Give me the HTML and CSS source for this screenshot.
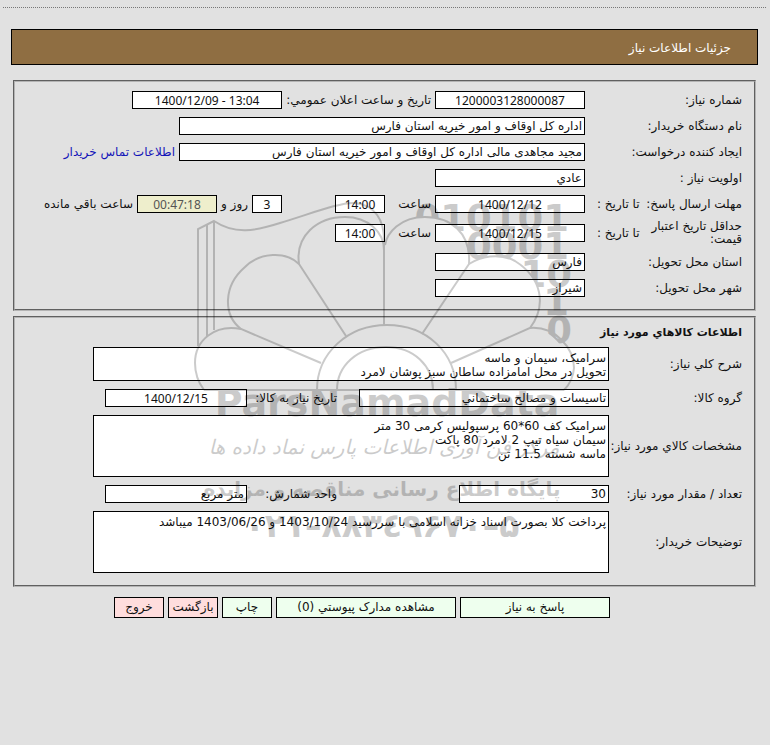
FILE: index.html
```html
<!DOCTYPE html>
<html lang="fa" dir="rtl">
<head>
    <meta charset="UTF-8">
    <meta name="viewport" content="width=device-width, initial-scale=1.0">
    <title>جزئیات اطلاعات نیاز</title>
    <link rel="stylesheet" href="styles.css">
</head>
<body>
    <hr class="top-line">
    <h1 class="title-bar">جزئیات اطلاعات نیاز</h1>

    <main class="content">
        <section class="panel info">
            <div class="row">
                <label class="name" for="number">شماره نیاز:</label>
                <input class="field medium center" id="number" value="1200003128000087" readonly>
                <label for="announce">تاریخ و ساعت اعلان عمومي:</label>
                <input class="field medium center" id="announce" value="1400/12/09 - 13:04" dir="ltr" readonly>
            </div>
            <div class="row">
                <label class="name" for="org">نام دستگاه خریدار:</label>
                <input class="field long" id="org" value="اداره کل اوقاف و امور خیریه استان فارس" readonly>
            </div>
            <div class="row">
                <label class="name" for="creator">ایجاد کننده درخواست:</label>
                <input class="field long" id="creator" value="مجید مجاهدی مالی اداره کل اوقاف و امور خیریه استان فارس" readonly>
                <a href="#contact">اطلاعات تماس خریدار</a>
            </div>
            <div class="row">
                <label class="name" for="priority">اولویت نیاز :</label>
                <input class="field medium" id="priority" value="عادي" readonly>
            </div>
            <div class="row">
                <div class="name split">
                    <span>مهلت ارسال پاسخ:</span>
                    <label class="until" for="reply-date">تا تاریخ :</label>
                </div>
                <input class="field medium center" id="reply-date" value="1400/12/12" dir="ltr" readonly>
                <label class="hour" for="reply-hour">ساعت</label>
                <input class="field time center" id="reply-hour" value="14:00" dir="ltr" readonly>
                <div class="remaining">
                    <input class="field days center" id="days" value="3" readonly>
                    <label for="days">روز و</label>
                    <input class="field counter center" id="counter" value="00:47:18" dir="ltr" readonly>
                    <label for="counter">ساعت باقي مانده</label>
                </div>
            </div>
            <div class="row">
                <div class="name split">
                    <span class="two-lines">حداقل تاریخ اعتبار قیمت:</span>
                    <label class="until" for="price-date">تا تاریخ :</label>
                </div>
                <input class="field medium center" id="price-date" value="1400/12/15" dir="ltr" readonly>
                <label class="hour" for="price-hour">ساعت</label>
                <input class="field time center" id="price-hour" value="14:00" dir="ltr" readonly>
            </div>
            <div class="row">
                <label class="name" for="province">استان محل تحویل:</label>
                <input class="field medium" id="province" value="فارس" readonly>
            </div>
            <div class="row">
                <label class="name" for="city">شهر محل تحویل:</label>
                <input class="field medium" id="city" value="شیراز" readonly>
            </div>
        </section>

        <section class="panel goods">
            <h2>اطلاعات کالاهاي مورد نیاز</h2>
            <div class="row">
                <label class="name" for="summary">شرح کلي نیاز:</label>
                <textarea class="field area short" id="summary" readonly>سرامیک، سیمان و ماسه
تحویل در محل امامزاده ساطان سبز پوشان لامرد</textarea>
            </div>
            <div class="row">
                <label class="name" for="group">گروه کالا:</label>
                <div class="first"><input class="field group" id="group" value="تاسیسات و مصالح ساختماني" readonly></div>
                <label class="second" for="need-date">تاریخ نیاز به کالا:</label>
                <input class="field unit center" id="need-date" value="1400/12/15" dir="ltr" readonly>
            </div>
            <div class="row">
                <label class="name" for="specs">مشخصات کالاي مورد نیاز:</label>
                <textarea class="field area" id="specs" readonly>سرامیک کف 60*60 پرسپولیس کرمی 30 متر
سیمان سیاه تیپ 2 لامرد 80 پاکت
ماسه شسته 11.5 تن</textarea>
            </div>
            <div class="row">
                <label class="name" for="amount">تعداد / مقدار مورد نیاز:</label>
                <div class="first"><input class="field medium" id="amount" value="30" readonly></div>
                <label class="second" for="unit">واحد شمارش:</label>
                <input class="field unit" id="unit" value="متر مربع" readonly>
            </div>
            <div class="row">
                <label class="name" for="notes">توضیحات خریدار:</label>
                <textarea class="field area" id="notes" readonly>پرداخت کلا بصورت اسناد خزانه اسلامی با سررسید 1403/10/24 و 1403/06/26 میباشد</textarea>
            </div>
        </section>

        <div class="actions">
            <button class="btn large" type="button">پاسخ به نیاز</button>
            <button class="btn wide" type="button">مشاهده مدارک پیوستي (0)</button>
            <button class="btn" type="button">چاپ</button>
            <button class="btn red" type="button">بازگشت</button>
            <button class="btn red" type="button">خروج</button>
        </div>
    </main>

    <svg class="watermark" viewBox="-5 0 400 350" aria-hidden="true">
        <defs>
            <clipPath id="behind">
                <path d="M195 0H400V150H374C365 136 353 128 340 128C357 105 352 78 325 61C308 52 290 57 279 64C281 32 260 17 235 17C210 17 197 33 195 45Z"/>
            </clipPath>
        </defs>
        <g class="wm-digits" clip-path="url(#behind)">
            <text x="379" y="31">010101</text>
            <text x="379" y="59">0001</text>
            <text x="382" y="87">10</text>
            <text x="379" y="115">1</text>
            <text x="382" y="143">0</text>
        </g>
        <g class="wm-lines">
            <path d="M8 146V29L24 21C45 35 65 31 90 23C120 14 150 2 165 3C185 5 194 20 194 40"/>
            <path d="M17 136V25M24 130V21M194 125V40"/>
            <path d="M156 136L109 64C105 36 127 17 155 17C178 17 194 32 194 50"/>
            <path d="M109 64C96 51 70 52 55 67C33 86 33 115 51 129L131 163"/>
            <path d="M51 129C25 124 5 140 5 163Q5 178 14 190"/>
            <path d="M195 45C197 33 210 17 235 17C260 17 281 32 279 64L232 134"/>
            <path d="M279 64C290 57 308 52 325 61C352 78 357 105 340 128L261 163"/>
            <path d="M340 128C365 126 384 148 384 168Q383 181 374 190"/>
            <path d="M127 190C127 153 158 125 197 125C237 125 266 153 266 190M147 190C147 166 167 147 196 147C224 147 243 166 243 190M14 190H374"/>
        </g>
        <text class="wm-latin" x="197" y="216">ParsNamadData</text>
        <text class="wm-script" x="194" y="254">مرکز فن آوری اطلاعات پارس نماد داده ها</text>
        <text class="wm-persian" x="192" y="296">پایگاه اطلاع رسانی مناقصه و مزایده</text>
        <text class="wm-phone" x="192" y="337">۰۲۱–۸۸۳٤۹۶۷۰–۵</text>
    </svg>
</body>
</html>
```

FILE: styles.css
```css
* { margin: 0; padding: 0; box-sizing: border-box; }
body {
    position: relative;
    min-height: 100vh;
    background: #e1e1e1;
    color: #111;
    font-family: "DejaVu Sans", Tahoma, sans-serif;
    font-size: 12px;
    line-height: 13px;
}
.top-line {
    margin: 7px 4px 21px 3px;
    border: 0;
    border-top: 1px dotted #777;
}
.title-bar {
    margin: 0 12px 0 11px;
    padding: 0 26px;
    height: 36px;
    line-height: 36px;
    border: 1px solid #000;
    background: #8f6e42;
    color: #fff;
    font-size: 12px;
    font-weight: normal;
}
.content {
    margin: 15px 14px 0 13px;
}
.panel {
    display: flex;
    flex-direction: column;
    border: 2px groove #b4b4b4;
    padding: 8px 12px 11px;
}
.info { gap: 6px; }
.goods {
    gap: 8px;
    margin-top: 5px;
    padding-bottom: 12px;
}
.goods h2 {
    font-size: 11px;
    line-height: 13px;
}
.row {
    display: flex;
    align-items: center;
    gap: 4px;
    white-space: nowrap;
}
.info .row { min-height: 20px; }
.name { flex: none; }
.info .name { width: 153px; }
.goods .name { width: 129px; }
.split {
    display: flex;
    align-items: center;
    justify-content: space-between;
    padding-left: 8px;
}
.two-lines {
    width: 96px;
    white-space: normal;
}
.field {
    height: 18px;
    padding: 0 2px;
    border: 1px solid #000;
    border-radius: 0;
    background: #fff;
    color: #111;
    font-family: inherit;
    font-size: 12px;
    line-height: 14px;
}
.center {
    font-family: "Noto Sans", Tahoma, sans-serif;
    text-align: center;
}
.medium { width: 150px; }
.long { width: 406px; }
.group { width: 250px; }
.unit { width: 142px; }
.time { width: 50px; }
.days { width: 30px; }
.counter {
    width: 80px;
    background: #eeeecc;
    color: #555;
}
.hour { width: 42px; }
.remaining {
    display: flex;
    align-items: center;
    gap: 4px;
    margin-right: 49px;
}
.first { width: 268px; }
.second { width: 86px; }
.area {
    display: block;
    width: 516px;
    height: 62px;
    padding-top: 3px;
    resize: none;
    overflow: hidden;
}
.area.short { height: 34px; }
a {
    color: #1414b8;
    text-decoration: none;
}
.actions {
    display: flex;
    gap: 4px;
    margin-top: 10px;
    padding-right: 146px;
}
.btn {
    width: 50px;
    height: 21px;
    border: 1px solid #000;
    background: #eeffee;
    color: #111;
    font-family: inherit;
    font-size: 12px;
    line-height: 13px;
    white-space: nowrap;
}
.large { width: 150px; }
.wide { width: 180px; }
.red { background: #ffdddd; }

.watermark {
    position: absolute;
    top: 200px;
    left: 0;
    right: 0;
    width: 400px;
    height: 350px;
    margin: 0 auto;
    opacity: 0.2;
    pointer-events: none;
}
.watermark text {
    font-weight: bold;
    text-anchor: middle;
}
.wm-lines {
    fill: none;
    stroke: #000;
    stroke-width: 2;
}
.wm-digits {
    direction: ltr;
    font-size: 37px;
}
.watermark .wm-digits text { text-anchor: end; }
.wm-latin {
    direction: ltr;
    font-size: 38px;
}
.watermark .wm-script {
    font-size: 20px;
    font-style: italic;
    font-weight: normal;
}
.wm-persian { font-size: 20px; }
.wm-phone {
    direction: ltr;
    unicode-bidi: bidi-override;
    font-size: 33px;
}
```
